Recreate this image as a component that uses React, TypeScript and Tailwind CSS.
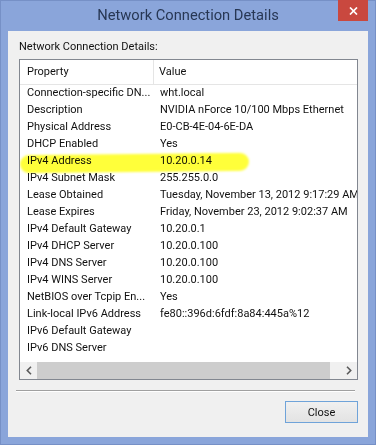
import React from "react";

const rows: [string, string][] = [
  ["Connection-specific DN...", "wht.local"],
  ["Description", "NVIDIA nForce 10/100 Mbps Ethernet"],
  ["Physical Address", "E0-CB-4E-04-6E-DA"],
  ["DHCP Enabled", "Yes"],
  ["IPv4 Address", "10.20.0.14"],
  ["IPv4 Subnet Mask", "255.255.0.0"],
  ["Lease Obtained", "Tuesday, November 13, 2012 9:17:29 AM"],
  ["Lease Expires", "Friday, November 23, 2012 9:02:37 AM"],
  ["IPv4 Default Gateway", "10.20.0.1"],
  ["IPv4 DHCP Server", "10.20.0.100"],
  ["IPv4 DNS Server", "10.20.0.100"],
  ["IPv4 WINS Server", "10.20.0.100"],
  ["NetBIOS over Tcpip En...", "Yes"],
  ["Link-local IPv6 Address", "fe80::396d:6fdf:8a84:445a%12"],
  ["IPv6 Default Gateway", ""],
  ["IPv6 DNS Server", ""],
];

function Chevron({ dir }: { dir: "left" | "right" }) {
  return (
    <svg width="6" height="9" viewBox="0 0 6 9">
      {dir === "left" ? (
        <path d="M5 0.8 L1.3 4.5 L5 8.2" fill="none" stroke="#5a5a5a" strokeWidth="1.6" />
      ) : (
        <path d="M1 0.8 L4.7 4.5 L1 8.2" fill="none" stroke="#5a5a5a" strokeWidth="1.6" />
      )}
    </svg>
  );
}

export default function App() {
  return (
    <div
      className="w-[376px] h-[445px] bg-[#8aa5da] border border-[#7690c6] flex flex-col text-[#111]"
      style={{ fontFamily: 'Roboto, "Liberation Sans", sans-serif' }}
    >
      <div className="h-[30px] relative flex items-center justify-center shrink-0">
        <span className="text-[14.7px] text-[#273754] leading-none pb-[1px]">Network Connection Details</span>
        <div className="absolute right-[7px] top-[-1px] w-[30px] h-[21px] bg-[#c9483f] flex items-center justify-center">
          <svg width="9" height="8" viewBox="0 0 9 8">
            <path d="M1 0.5 L8 7.5 M8 0.5 L1 7.5" stroke="#ffffff" strokeWidth="1.7" fill="none" />
          </svg>
        </div>
      </div>
      <div className="flex-1 mx-[7px] mb-[7px] bg-[#f0f0f0] flex flex-col">
        <div className="pl-[11px] pt-[8px] text-[11px] leading-[16px]">Network Connection Details:</div>
        <div className="ml-[11px] mt-[4px] w-[339px] h-[321px] border border-[#828790] bg-white flex flex-col relative overflow-hidden">
          <div className="h-[25px] border-b border-[#e5e5e5] flex items-center text-[11px] shrink-0">
            <div className="w-[134px] pl-[7px] h-full flex items-center border-r border-[#e5e5e5]">Property</div>
            <div className="pl-[5px]">Value</div>
          </div>
          <div
            className="absolute left-[0px] top-[94px] w-[229px] h-[18px] bg-[#ffff3a] rounded-[9px] blur-[1px] mix-blend-multiply"
            style={{ transform: "skewY(-0.6deg)" }}
          />
          <div className="flex flex-col text-[11px] relative mix-blend-multiply">
            {rows.map(([k, v], i) => (
              <div key={i} className="h-[17px] flex items-center whitespace-nowrap">
                <div className="w-[135px] pl-[7px] shrink-0 overflow-hidden">{k}</div>
                <div className="pl-[5px]">{v}</div>
              </div>
            ))}
          </div>
          <div className="flex-1" />
          <div className="h-[17px] flex shrink-0 bg-[#f0f0f0]">
            <div className="w-[17px] flex items-center justify-center">
              <Chevron dir="left" />
            </div>
            <div className="w-[293px] bg-[#cdcdcd]" />
            <div className="flex-1" />
            <div className="w-[17px] flex items-center justify-center">
              <Chevron dir="right" />
            </div>
          </div>
        </div>
        <div className="ml-[8px] mt-[10px] w-[339px] border-t border-[#a0a0a0] border-b border-b-white" />
        <div className="flex justify-end mr-[10px] mt-[9px]">
          <button className="w-[73px] h-[22px] border border-[#6fa3d9] bg-gradient-to-b from-[#f0f0f0] to-[#e3e3e3] text-[11px] leading-none flex items-center justify-center">
            Close
          </button>
        </div>
      </div>
    </div>
  );
}
